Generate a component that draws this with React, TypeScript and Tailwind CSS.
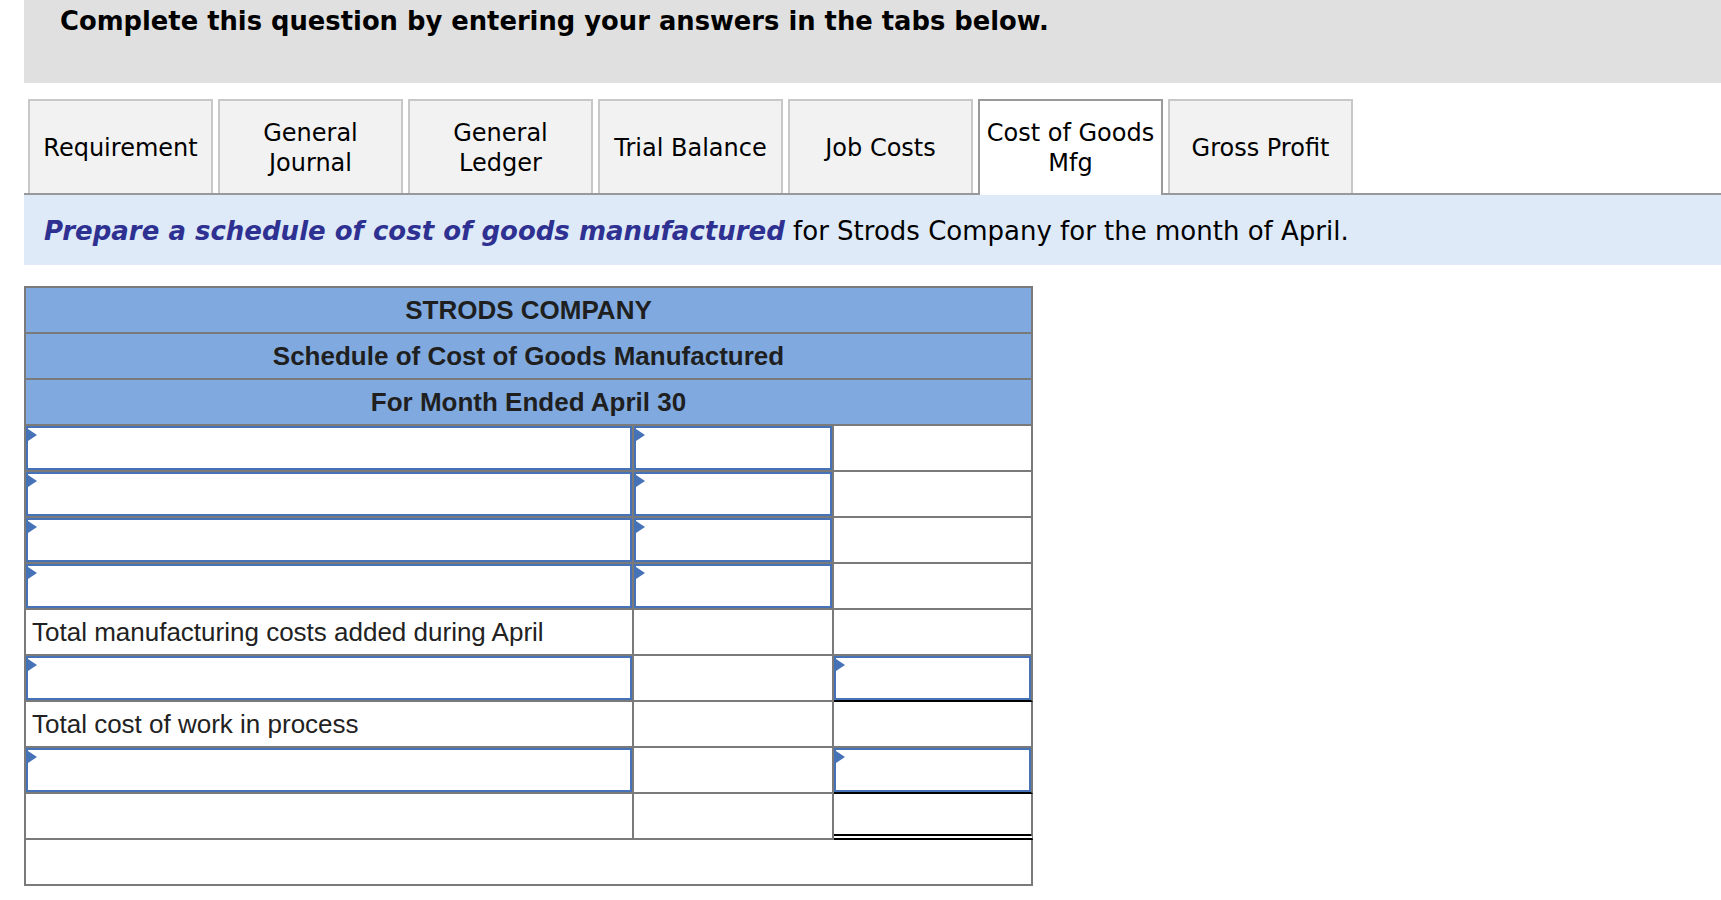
import React from "react";

type Cell = {
  kind: "input" | "plain" | "label";
  text?: string;
  bottom?: "black" | "double";
};

const tabs: { lines: string[]; active?: boolean }[] = [
  { lines: ["Requirement"] },
  { lines: ["General", "Journal"] },
  { lines: ["General", "Ledger"] },
  { lines: ["Trial Balance"] },
  { lines: ["Job Costs"] },
  { lines: ["Cost of Goods", "Mfg"], active: true },
  { lines: ["Gross Profit"] },
];

const rows: Cell[][] = [
  [{ kind: "input" }, { kind: "input" }, { kind: "plain" }],
  [{ kind: "input" }, { kind: "input" }, { kind: "plain" }],
  [{ kind: "input" }, { kind: "input" }, { kind: "plain" }],
  [{ kind: "input" }, { kind: "input" }, { kind: "plain" }],
  [
    { kind: "label", text: "Total manufacturing costs added during April" },
    { kind: "plain" },
    { kind: "plain" },
  ],
  [{ kind: "input" }, { kind: "plain" }, { kind: "input", bottom: "black" }],
  [
    { kind: "label", text: "Total cost of work in process" },
    { kind: "plain" },
    { kind: "plain" },
  ],
  [{ kind: "input" }, { kind: "plain" }, { kind: "input", bottom: "black" }],
  [{ kind: "plain" }, { kind: "plain" }, { kind: "plain", bottom: "double" }],
];

const widths = ["w-[608px]", "w-[200px]", "w-[199px]"];

const InputBox: React.FC = () => (
  <div className="relative h-full w-full border-2 border-[#4672b8] bg-white">
    <div className="absolute left-0 top-[1px] h-0 w-0 border-y-[6px] border-l-[9px] border-y-transparent border-l-[#4672b8]" />
  </div>
);

const TableCell: React.FC<{ cell: Cell; width: string }> = ({ cell, width }) => {
  let bottom = "border-b-2 border-b-[#7a7a7a]";
  if (cell.bottom === "black") bottom = "border-b-2 border-b-black";
  if (cell.bottom === "double") bottom = "border-b-[6px] border-double border-b-black";
  return (
    <div className={`${width} h-[46px] shrink-0 border-r-2 border-r-[#7a7a7a] ${bottom}`}>
      {cell.kind === "input" && <InputBox />}
      {cell.kind === "label" && (
        <div className="flex h-full items-center pl-[6px] text-[26px] text-[#222]">
          {cell.text}
        </div>
      )}
    </div>
  );
};

const HeaderRow: React.FC<{ text: string }> = ({ text }) => (
  <div className="flex h-[46px] items-center justify-center border-r-2 border-b-2 border-[#7a7a7a] bg-[#80aadf] text-[26px] font-bold text-[#1f1f1f]">
    {text}
  </div>
);

export default function App() {
  return (
    <div className="min-h-screen bg-white pl-[24px] font-['DejaVu_Sans',sans-serif]">
      <div className="flex h-[83px] items-start bg-[#e0e0e0] pl-[36px] pt-[4px]">
        <h2 className="text-[25.8px] font-bold leading-[34px] text-black">
          Complete this question by entering your answers in the tabs below.
        </h2>
      </div>

      <div className="flex gap-[5px] pl-[4px] pt-[16px]">
        {tabs.map((t) => (
          <div
            key={t.lines.join(" ")}
            className={
              t.active
                ? "relative z-10 -mb-[2px] flex h-[96px] w-[185px] flex-col items-center justify-center border-2 border-b-0 border-[#9a9a9a] bg-white pb-[2px] pt-[2px] text-center text-[24px] leading-[30px] text-black"
                : "flex h-[94px] w-[185px] flex-col items-center justify-center border-2 border-b-0 border-[#c8c8c8] bg-[#f2f2f2] pt-[2px] text-center text-[24px] leading-[30px] text-black"
            }
          >
            {t.lines.map((l) => (
              <span key={l}>{l}</span>
            ))}
          </div>
        ))}
      </div>
      <div className="h-[2px] bg-[#999]" />
      <div className="flex h-[70px] items-center bg-[#deeaf7] pl-[20px] pt-[2px] text-[26px] text-black">
        <p>
          <span className="font-bold italic text-[#2e3192]">
            Prepare a schedule of cost of goods manufactured
          </span>{" "}
          for Strods Company for the month of April.
        </p>
      </div>

      <div className="mt-[21px] w-[1009px] border-l-2 border-t-2 border-[#7a7a7a] font-['Liberation_Sans',Arial,sans-serif]">
        <HeaderRow text="STRODS COMPANY" />
        <HeaderRow text="Schedule of Cost of Goods Manufactured" />
        <HeaderRow text="For Month Ended April 30" />
        {rows.map((row, i) => (
          <div key={i} className="flex">
            {row.map((cell, j) => (
              <TableCell key={j} cell={cell} width={widths[j]} />
            ))}
          </div>
        ))}
        <div className="h-[46px] border-r-2 border-b-2 border-[#7a7a7a]" />
      </div>
    </div>
  );
}
